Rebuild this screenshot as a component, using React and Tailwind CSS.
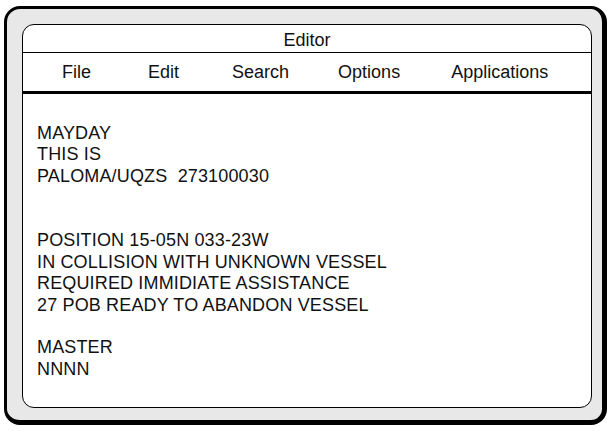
import React from "react";

const menuItems = [
  { label: "File", ml: "ml-[39px]" },
  { label: "Edit", ml: "ml-[57px]" },
  { label: "Search", ml: "ml-[53px]" },
  { label: "Options", ml: "ml-[49px]" },
  { label: "Applications", ml: "ml-[51px]" },
];

const lines = [
  "MAYDAY",
  "THIS IS",
  "PALOMA/UQZS\u00a0\u00a0273100030",
  "",
  "",
  "POSITION 15-05N 033-23W",
  "IN COLLISION WITH UNKNOWN VESSEL",
  "REQUIRED IMMIDIATE ASSISTANCE",
  "27 POB READY TO ABANDON VESSEL",
  "",
  "MASTER",
  "NNNN",
];

const App = () => {
  return (
    <div className="pt-[6px] pl-[4px] bg-white min-h-screen font-['Liberation_Sans',Arial,sans-serif] text-[#111]">
      <div className="w-[603px] h-[419px] border-t-[3px] border-l-[3px] border-r-[5px] border-b-[5px] border-black rounded-[16px] bg-[#e8e8e8] pt-[15px] pl-[15px]">
        <div className="w-[570px] h-[384px] bg-white border border-black rounded-[12px] overflow-hidden">
          {/* title bar */}
          <div className="h-[28px] pt-[4px] border-b border-black text-center text-[18px] leading-[23px]">
            Editor
          </div>

          {/* menu */}
          <div className="flex h-[41px] border-b-[3px] border-black text-[18px] leading-[38px]">
            {menuItems.map((item) => (
              <span key={item.label} className={item.ml}>
                {item.label}
              </span>
            ))}
          </div>

          {/* message body */}
          <div className="pt-[29px] pl-[14px] text-[18px] leading-[21.45px] tracking-[0.15px]">
            {lines.map((line, i) => (
              <div key={i} className="h-[21.45px] whitespace-pre">
                {line}
              </div>
            ))}
          </div>
        </div>
      </div>
    </div>
  );
};

export default App;
